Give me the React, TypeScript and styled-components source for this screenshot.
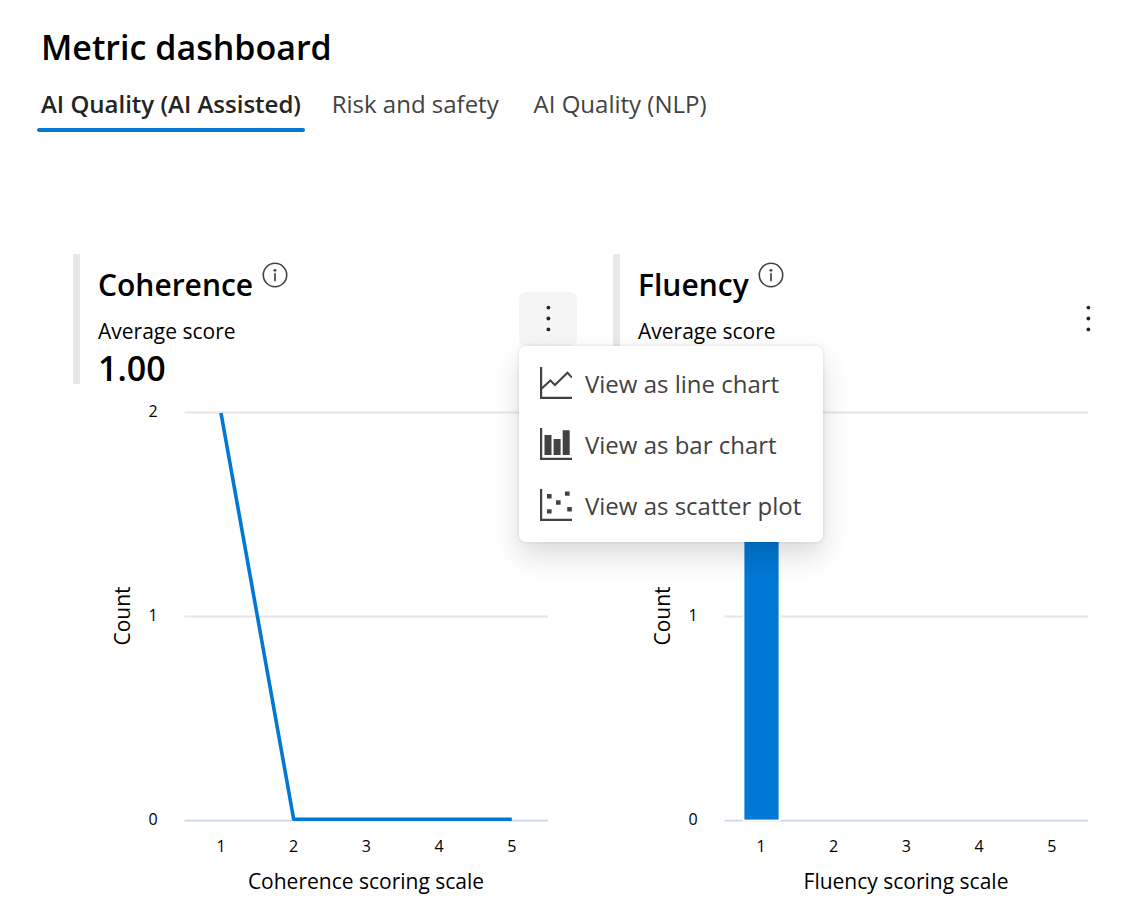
import React from "react";
import styled, { createGlobalStyle } from "styled-components";

const GlobalStyle = createGlobalStyle`
  *, *::before, *::after { box-sizing: border-box; }
  body {
    margin: 0;
    background: #fff;
    color: #000;
    font-family: "Segoe UI", "Open Sans", "Noto Sans", sans-serif;
  }
  button { font-family: inherit; }
`;

const Page = styled.main`
  padding: 22px 31px 16px 37px;
`;

const Title = styled.h1`
  margin: 0;
  padding-left: 4px;
  font-size: 34px;
  line-height: 50px;
  font-weight: 600;
`;

const TabList = styled.div`
  display: flex;
  gap: 19px;
  margin-top: 8px;
`;

/* The hidden ::before keeps room for the bold label, so tabs do not shift when selected. */
const Tab = styled.button<{ $active?: boolean }>`
  display: flex;
  flex-direction: column;
  align-items: center;
  padding: 0 4px;
  border: 0;
  background: none;
  position: relative;
  height: 52px;
  font-size: 24px;
  line-height: 48px;
  white-space: nowrap;
  color: ${(p) => (p.$active ? "#242424" : "#424242")};
  font-weight: ${(p) => (p.$active ? 600 : 400)};

  &::before {
    content: attr(data-label);
    height: 0;
    overflow: hidden;
    visibility: hidden;
    font-weight: 600;
  }

  &::after {
    content: "";
    position: absolute;
    left: 0;
    right: 0;
    bottom: 0;
    height: 4px;
    border-radius: 2px;
    background: ${(p) => (p.$active ? "#0078d4" : "transparent")};
  }
`;

const Cards = styled.div`
  display: grid;
  grid-template-columns: 1fr 1fr;
  gap: 36px;
  margin-top: 122px;
  padding-left: 36px;
`;

const Card = styled.section`
  min-width: 0;
`;

const CardHeader = styled.header`
  display: flex;
  justify-content: space-between;
  align-items: center;
  height: 130px;
  border-left: 7px solid #e8e8e8;
  padding-left: 18px;
`;

const Summary = styled.div`
  display: flex;
  flex-direction: column;
  align-self: flex-start;
`;

const NameRow = styled.div`
  display: flex;
  gap: 9px;
  height: 64px;
`;

const Name = styled.h2`
  margin: 0;
  font-size: 30px;
  line-height: 62px;
  font-weight: 600;
`;

const InfoButton = styled.button`
  display: flex;
  width: 26px;
  height: 26px;
  margin-top: 8px;
  padding: 0;
  border: 0;
  background: none;
  color: #424242;
`;

const Label = styled.div`
  font-size: 21px;
  line-height: 26px;
`;

const Score = styled.div`
  font-size: 34px;
  line-height: 48px;
  font-weight: 600;
`;

const MenuAnchor = styled.div`
  position: relative;
`;

const MoreButton = styled.button<{ $open?: boolean }>`
  display: flex;
  align-items: center;
  justify-content: center;
  width: 58px;
  height: 54px;
  padding: 0;
  border: 0;
  border-radius: 7px;
  color: #242424;
  background: ${(p) => (p.$open ? "#f5f5f5" : "transparent")};
`;

const Menu = styled.div`
  position: absolute;
  z-index: 2;
  top: 100%;
  left: 0;
  width: 304px;
  padding: 8px;
  display: flex;
  flex-direction: column;
  gap: 3px;
  border-radius: 7px;
  background: #fff;
  box-shadow: 0 0 4px rgba(0, 0, 0, 0.12), 0 14px 28px rgba(0, 0, 0, 0.14);
`;

const MenuItem = styled.button`
  display: flex;
  align-items: center;
  gap: 13px;
  height: 58px;
  padding: 0 13px;
  border: 0;
  background: none;
  color: #424242;
  font-size: 24px;
  line-height: 32px;
  white-space: nowrap;
`;

const MenuText = styled.span`
  padding-top: 2px;
`;

const ChartSvg = styled.svg`
  display: block;
  width: 100%;
  height: auto;

  text {
    fill: #000;
    font-size: 16px;
    text-anchor: middle;
  }
  text.axis-title {
    font-size: 21px;
  }
`;

const InfoIcon = () => (
  <svg width="26" height="26" viewBox="0 0 26 26" aria-hidden="true">
    <circle cx="13" cy="13" r="11.7" fill="none" stroke="currentColor" strokeWidth="1.6" />
    <circle cx="13" cy="8.3" r="1.4" fill="currentColor" />
    <path d="M13 11.8v6.8" stroke="currentColor" strokeWidth="1.7" strokeLinecap="round" />
  </svg>
);

const MoreIcon = () => (
  <svg width="36" height="36" viewBox="0 0 36 36" aria-hidden="true" fill="currentColor">
    <circle cx="18.4" cy="6.6" r="1.9" />
    <circle cx="18.4" cy="17.5" r="1.9" />
    <circle cx="18.4" cy="28.4" r="1.9" />
  </svg>
);

type IconKind = "line" | "bar" | "scatter";

const MenuIcon = ({ kind }: { kind: IconKind }) => (
  <svg width="32" height="32" viewBox="0 0 32 32" aria-hidden="true" fill="#424242">
    <path d="M0 0h2.2v29.8H32V32H0z" />
    {kind === "line" && (
      <path d="M1.5 21.8L10.4 13.5L14.9 18L27.5 5.8L32 10.6" fill="none" stroke="#424242" strokeWidth="2" />
    )}
    {kind === "bar" && <path d="M4.5 7h7v20h-7zM13.6 11h7v16h-7zM22.7 2.2h7V27h-7z" />}
    {kind === "scatter" && (
      <path d="M7 5h4.6v4.4H7zM25 2.4h4.6v4.4H25zM16 11.3h4.6v4.4H16zM7 20.2h4.6v4.4H7zM27.2 18h4.6v4.4h-4.6z" />
    )}
  </svg>
);

const options: { kind: IconKind; text: string }[] = [
  { kind: "line", text: "View as line chart" },
  { kind: "bar", text: "View as bar chart" },
  { kind: "scatter", text: "View as scatter plot" },
];

const counts = [2, 0, 0, 0, 0];
const xOf = (i: number) => 148 + i * 72.7;
const yOf = (v: number) => 436 - v * 204;

const Chart = ({ name, type }: { name: string; type: "line" | "bar" }) => (
  <ChartSvg viewBox="0 0 504 516" role="img" aria-label={`${name} score counts`}>
    {[2, 1].map((v) => (
      <path key={v} d={`M111.5 ${yOf(v) + 0.5}H475`} stroke="#e6e6e6" strokeWidth="1.8" />
    ))}
    <path d="M111.5 436.7H475" stroke="#ccd6eb" strokeWidth="1.8" />
    {[2, 1, 0].map((v) => (
      <text key={v} x="80" y={yOf(v) + 5}>{v}</text>
    ))}
    {counts.map((_, i) => (
      <text key={i} x={xOf(i)} y="468">{i + 1}</text>
    ))}
    {type === "line" ? (
      <path
        d={"M" + counts.map((c, i) => `${xOf(i)} ${yOf(c) + (c ? 1 : -0.8)}`).join("L")}
        fill="none"
        stroke="#0078d4"
        strokeWidth="3.6"
        strokeLinejoin="round"
      />
    ) : (
      counts.map((c, i) =>
        c ? (
          <rect
            key={i}
            x={xOf(i) - 17.5}
            y={yOf(c)}
            width="36"
            height={436.5 - yOf(c)}
            fill="#0078d4"
            stroke="#fff"
            strokeWidth="1.8"
          />
        ) : null
      )
    )}
    <text className="axis-title" transform="translate(57 232) rotate(-90)">Count</text>
    <text className="axis-title" x="293" y="505">{name} scoring scale</text>
  </ChartSvg>
);

interface MetricCardProps {
  name: string;
  type: "line" | "bar";
  score?: string;
  open?: boolean;
}

const MetricCard = ({ name, type, score, open }: MetricCardProps) => (
  <Card>
    <CardHeader>
      <Summary>
        <NameRow>
          <Name>{name}</Name>
          <InfoButton aria-label={`About ${name}`}>
            <InfoIcon />
          </InfoButton>
        </NameRow>
        <Label>Average score</Label>
        {score && <Score>{score}</Score>}
      </Summary>
      <MenuAnchor>
        <MoreButton $open={open} aria-label={`${name} chart options`} aria-haspopup="menu" aria-expanded={!!open}>
          <MoreIcon />
        </MoreButton>
        {open && (
          <Menu role="menu">
            {options.map((o) => (
              <MenuItem key={o.kind} role="menuitem">
                <MenuIcon kind={o.kind} />
                <MenuText>{o.text}</MenuText>
              </MenuItem>
            ))}
          </Menu>
        )}
      </MenuAnchor>
    </CardHeader>
    <Chart name={name} type={type} />
  </Card>
);

const tabs = ["AI Quality (AI Assisted)", "Risk and safety", "AI Quality (NLP)"];

export default function App() {
  return (
    <Page>
      <GlobalStyle />
      <Title>Metric dashboard</Title>
      <TabList role="tablist">
        {tabs.map((t, i) => (
          <Tab key={t} role="tab" aria-selected={i === 0} data-label={t} $active={i === 0}>
            {t}
          </Tab>
        ))}
      </TabList>
      <Cards>
        <MetricCard name="Coherence" type="line" score="1.00" open />
        <MetricCard name="Fluency" type="bar" />
      </Cards>
    </Page>
  );
}
